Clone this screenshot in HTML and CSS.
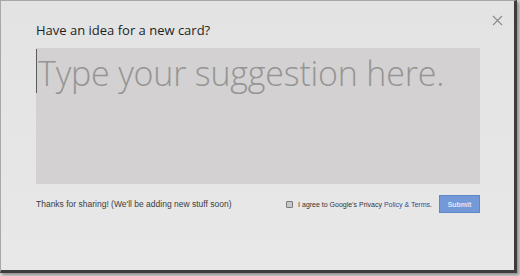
FILE: index.html
```html
<!DOCTYPE html>
<html lang="en">
<head>
  <meta charset="UTF-8" />
  <title>Suggest a card</title>
  <link rel="stylesheet" href="styles.css">
</head>
<body>
  <div class="frame">
    <div class="dialog">
      <button class="close" aria-label="Close">
        <svg width="11" height="11" viewBox="0 0 11 11"><path d="M1 1L10 10M10 1L1 10" stroke="#8a8a8a" stroke-width="1.1" fill="none"/></svg>
      </button>
      <h1>Have an idea for a new card?</h1>
      <div class="suggest">
        <span class="caret"></span>
        <span class="placeholder">Type your suggestion here.</span>
      </div>
      <div class="footer">
        <p class="thanks">Thanks for sharing! (We'll be adding new stuff soon)</p>
        <label class="agree">
          <span class="box"></span>
          <span>I agree to Google's Privacy <a href="#">Policy &amp; Terms</a>.</span>
        </label>
        <button class="submit">Submit</button>
      </div>
    </div>
  </div>
</body>
</html>
```

FILE: styles.css
```css
* {
  box-sizing: border-box;
}
body {
  margin: 0;
  background: #d6d6d6;
  width: 520px;
  height: 276px;
  overflow: hidden;
}
.frame {
  width: 517px;
  height: 273px;
  border-top: 1px solid #a8a8a8;
  border-left: 1px solid #a8a8a8;
  border-right: 3px solid #3c3c3c;
  border-bottom: 3px solid #3c3c3c;
  box-shadow: 2px 2px 3px rgba(0,0,0,0.35);
  background: #e5e5e5;
}
.dialog {
  position: relative;
  height: 100%;
  padding: 20px 32px 0 35px;
  background: linear-gradient(to bottom, #e3e3e3, #e8e8e8);
}
.close {
  position: absolute;
  top: 14px;
  right: 11px;
  background: none;
  border: none;
  padding: 0;
  width: 11px;
  height: 11px;
  display: flex;
}
h1 {
  margin: 0 0 8px;
  font-family: "Open Sans", sans-serif;
  font-weight: 400;
  font-size: 13px;
  line-height: 19px;
  color: #1e1e1e;
}
.suggest {
  position: relative;
  height: 136px;
  width: 444px;
  background: #d3d1d1;
  padding: 3px 0 0 2px;
}
.caret {
  position: absolute;
  left: 0;
  top: 1px;
  width: 1px;
  height: 44px;
  background: #5a5a5a;
}
.placeholder {
  font-family: "Open Sans", sans-serif;
  font-weight: 300;
  font-size: 34px;
  line-height: 44px;
  color: #959595;
  letter-spacing: -0.2px;
}
.footer {
  display: flex;
  align-items: center;
  margin-top: 11px;
  width: 444px;
}
.thanks {
  margin: 0;
  flex: 1;
  font-family: "Liberation Sans", Arial, sans-serif;
  font-size: 8.5px;
  color: #3c3c3c;
}
.agree {
  display: flex;
  align-items: center;
  gap: 5px;
  font-family: "Liberation Sans", Arial, sans-serif;
  font-size: 7px;
  color: #333;
  margin-right: 7px;
}
.agree a {
  color: #2a4f9a;
  text-decoration: none;
}
.box {
  width: 7px;
  height: 7px;
  border: 1px solid #7a7a7a;
  background: #c8c8c8;
  border-radius: 1px;
}
.submit {
  width: 41px;
  height: 18px;
  border: 1px solid #5f86c8;
  background: #7399d9;
  color: #dfe8f8;
  font-family: "Liberation Sans", Arial, sans-serif;
  font-size: 7px;
  font-weight: bold;
  padding: 0;
}
```
